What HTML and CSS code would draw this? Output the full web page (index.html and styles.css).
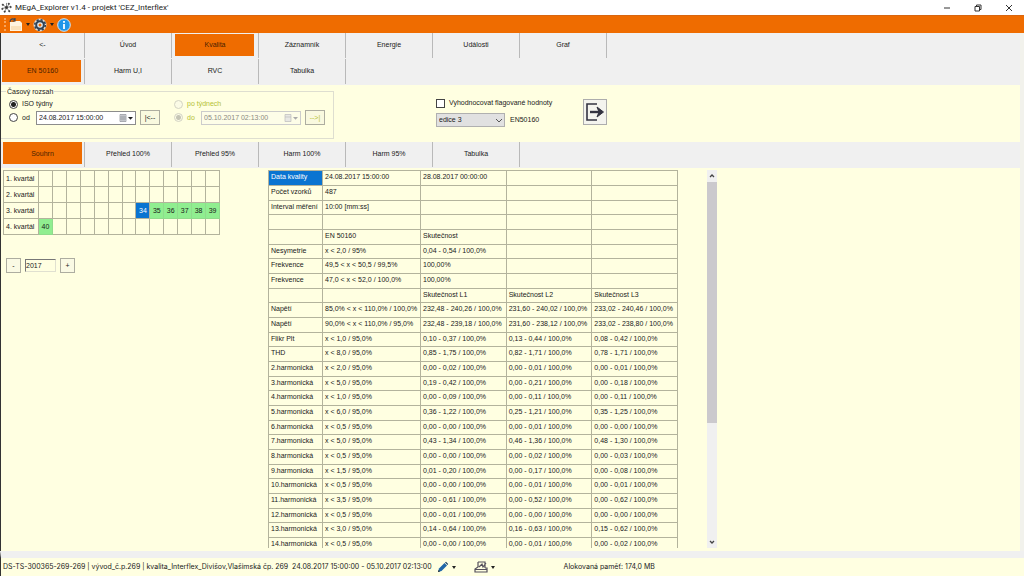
FILE: index.html
```html
<!DOCTYPE html>
<html lang="cs">
<head>
<meta charset="utf-8">
<title>MEgA_Explorer v1.4 - projekt 'CEZ_Interflex'</title>
<link rel="stylesheet" href="styles.css">
</head>
<body>
<header class="titlebar">
  <svg class="app-icon" viewBox="0 0 12 12"><g stroke="#333" stroke-width=".6" fill="#333"><path d="M6 6L6 1M6 6L2 3M6 6L1.500 7M6 6L4 11M6 6L9 10M6 6L10.500 5M6 6L9 2"/><circle cx="6" cy="6" r="1.300"/><circle cx="2" cy="3" r=".8"/><circle cx="1.500" cy="7.500" r=".8"/><circle cx="4" cy="10.500" r=".8"/><circle cx="9" cy="10" r=".8"/><circle cx="10.500" cy="5.500" r=".8"/><circle cx="8.500" cy="2" r=".8"/></g></svg>
  <h1 class="title">MEgA_Explorer v1.4 - projekt 'CEZ_Interflex'</h1>
  <div class="window-buttons">
    <button aria-label="Minimalizovat"><svg viewBox="0 0 8 8"><path d="M1 4H7" stroke="#333" fill="none"/></svg></button>
    <button aria-label="Obnovit"><svg viewBox="0 0 8 8"><path d="M1 2.500H5.500V7H1ZM2.500 2.500V1H7V5.500H5.500" stroke="#333" fill="none"/></svg></button>
    <button aria-label="Zavřít"><svg viewBox="0 0 8 8"><path d="M1 1L7 7M7 1L1 7" stroke="#333" fill="none"/></svg></button>
  </div>
</header>
<nav class="toolbar">
  <span class="grip"></span>
  <button class="tool" aria-label="Otevřít"><svg width="14" height="14" viewBox="0 0 14 14"><path d="M1 4V13H13V5L11 3H6L5 4Z" fill="#fff3df"/><path d="M2 9H12M2 11H12" stroke="#f5cf98"/><path d="M1 4C1 1 4 0 6 2M6 0V3H3.500" stroke="#34465c" stroke-width="1.200" fill="none"/></svg><i class="caret"></i></button>
  <button class="tool" aria-label="Nastavení"><svg width="14" height="14" viewBox="0 0 14 14"><circle cx="7" cy="7" r="6.500" fill="#e3dcd2"/><circle cx="7" cy="7" r="3.800" fill="#e8ecee" stroke="#2f4256" stroke-width="2"/><circle cx="7" cy="7" r="5.300" fill="none" stroke="#2f4256" stroke-width="1.600" stroke-dasharray="2.160 2"/><circle cx="7" cy="7" r="1.500" fill="#ef6c00"/></svg><i class="caret"></i></button>
  <button class="tool" aria-label="Informace"><svg width="14" height="14" viewBox="0 0 14 14"><circle cx="7" cy="7" r="6.300" fill="#2196e8" stroke="#d5e6f2"/><path d="M7 3V4.800M7 6V11" stroke="#fff" stroke-width="1.800"/></svg></button>
</nav>
<main class="client">
  <nav class="tabs">
    <button>&lt;-</button><button>Úvod</button><button class="active">Kvalita</button><button>Záznamník</button><button>Energie</button><button>Události</button><button>Graf</button>
  </nav>
  <nav class="tabs tabs-sub">
    <button class="active">EN 50160</button><button>Harm U,I</button><button>RVC</button><button>Tabulka</button>
  </nav>
  <form class="filters">
    <fieldset class="range">
      <legend>Časový rozsah</legend>
      <div class="range-side">
        <label><input type="radio" name="from" checked>ISO týdny</label>
        <div class="range-line">
          <label><input type="radio" name="from">od</label>
          <span class="date"><input type="text" value="24.08.2017 15:00:00" aria-label="Od"><svg viewBox="0 0 14 8"><path d="M1 .5H7V7.500H1ZM1 3H7M1 5H7M3 1V7M5 1V7" stroke="#8a8d94" fill="#e3e5ea" stroke-width=".7"/><path d="M9 3H14L11.500 5.800Z" fill="#222"/></svg></span>
          <button type="button" class="step">|&lt;--</button>
        </div>
      </div>
      <div class="range-side disabled">
        <label><input type="radio" name="to" disabled>po týdnech</label>
        <div class="range-line">
          <label><input type="radio" name="to" checked disabled>do</label>
          <span class="date"><input type="text" value="05.10.2017 02:13:00" aria-label="Do" disabled><svg viewBox="0 0 14 8"><path d="M1 .5H7V7.500H1ZM1 3H7" stroke="#bbb" fill="#e8e8e4" stroke-width=".7"/><path d="M9 3H14L11.500 5.800Z" fill="#aaa"/></svg></span>
          <button type="button" class="step" disabled>--&gt;|</button>
        </div>
      </div>
    </fieldset>
    <div class="norm">
      <label><input type="checkbox">Vyhodnocovat flagované hodnoty</label>
      <div class="norm-line"><select id="edition" aria-label="Edice"><option>edice 3</option></select><label for="edition">EN50160</label></div>
    </div>
    <button type="button" class="export" aria-label="Export"><svg viewBox="0 0 20 20"><path d="M12 2H2V18H12" fill="none" stroke="#333340" stroke-width="1.600"/><path d="M5 10H17" stroke="#333340" stroke-width="2.400"/><path d="M12 5L18.500 10L12 15L14 10Z" fill="#333340" stroke="#333340"/></svg></button>
  </form>
  <nav class="tabs tabs-view">
    <button class="active">Souhrn</button><button>Přehled 100%</button><button>Přehled 95%</button><button>Harm 100%</button><button>Harm 95%</button><button>Tabulka</button>
  </nav>
  <section class="content">
    <aside class="weeks">
      <table class="week-grid">
        <tr><th>1. kvartál</th><td></td><td></td><td></td><td></td><td></td><td></td><td></td><td></td><td></td><td></td><td></td><td></td><td></td></tr>
        <tr><th>2. kvartál</th><td></td><td></td><td></td><td></td><td></td><td></td><td></td><td></td><td></td><td></td><td></td><td></td><td></td></tr>
        <tr><th>3. kvartál</th><td></td><td></td><td></td><td></td><td></td><td></td><td></td><td class="sel">34</td><td class="has">35</td><td class="has">36</td><td class="has">37</td><td class="has">38</td><td class="has">39</td></tr>
        <tr><th>4. kvartál</th><td class="has">40</td><td></td><td></td><td></td><td></td><td></td><td></td><td></td><td></td><td></td><td></td><td></td><td></td></tr>
      </table>
      <div class="year"><button>-</button><input type="text" value="2017" aria-label="Rok"><button>+</button></div>
    </aside>
    <div class="results">
      <table class="summary">
        <colgroup><col class="c-name"><col class="c-limit"><col class="c-val"><col class="c-val"><col class="c-val"></colgroup>
        <tr><td class="sel">Data kvality</td><td>24.08.2017 15:00:00</td><td>28.08.2017 00:00:00</td><td></td><td></td></tr>
        <tr><td>Počet vzorků</td><td>487</td><td></td><td></td><td></td></tr>
        <tr><td>Interval měření</td><td>10:00 [mm:ss]</td><td></td><td></td><td></td></tr>
        <tr><td></td><td></td><td></td><td></td><td></td></tr>
        <tr><td></td><td>EN 50160</td><td>Skutečnost</td><td></td><td></td></tr>
        <tr><td>Nesymetrie</td><td>x &lt; 2,0 / 95%</td><td>0,04 - 0,54 / 100,0%</td><td></td><td></td></tr>
        <tr><td>Frekvence</td><td>49,5 &lt; x &lt; 50,5 / 99,5%</td><td>100,00%</td><td></td><td></td></tr>
        <tr><td>Frekvence</td><td>47,0 &lt; x &lt; 52,0 / 100,0%</td><td>100,00%</td><td></td><td></td></tr>
        <tr><td></td><td></td><td>Skutečnost L1</td><td>Skutečnost L2</td><td>Skutečnost L3</td></tr>
        <tr><td>Napětí</td><td>85,0% &lt; x &lt; 110,0% / 100,0%</td><td>232,48 - 240,26 / 100,0%</td><td>231,60 - 240,02 / 100,0%</td><td>233,02 - 240,46 / 100,0%</td></tr>
        <tr><td>Napětí</td><td>90,0% &lt; x &lt; 110,0% / 95,0%</td><td>232,48 - 239,18 / 100,0%</td><td>231,60 - 238,12 / 100,0%</td><td>233,02 - 238,80 / 100,0%</td></tr>
        <tr><td>Flikr Plt</td><td>x &lt; 1,0 / 95,0%</td><td>0,10 - 0,37 / 100,0%</td><td>0,13 - 0,44 / 100,0%</td><td>0,08 - 0,42 / 100,0%</td></tr>
        <tr><td>THD</td><td>x &lt; 8,0 / 95,0%</td><td>0,85 - 1,75 / 100,0%</td><td>0,82 - 1,71 / 100,0%</td><td>0,78 - 1,71 / 100,0%</td></tr>
        <tr><td>2.harmonická</td><td>x &lt; 2,0 / 95,0%</td><td>0,00 - 0,02 / 100,0%</td><td>0,00 - 0,01 / 100,0%</td><td>0,00 - 0,01 / 100,0%</td></tr>
        <tr><td>3.harmonická</td><td>x &lt; 5,0 / 95,0%</td><td>0,19 - 0,42 / 100,0%</td><td>0,00 - 0,21 / 100,0%</td><td>0,00 - 0,18 / 100,0%</td></tr>
        <tr><td>4.harmonická</td><td>x &lt; 1,0 / 95,0%</td><td>0,00 - 0,09 / 100,0%</td><td>0,00 - 0,11 / 100,0%</td><td>0,00 - 0,11 / 100,0%</td></tr>
        <tr><td>5.harmonická</td><td>x &lt; 6,0 / 95,0%</td><td>0,36 - 1,22 / 100,0%</td><td>0,25 - 1,21 / 100,0%</td><td>0,35 - 1,25 / 100,0%</td></tr>
        <tr><td>6.harmonická</td><td>x &lt; 0,5 / 95,0%</td><td>0,00 - 0,00 / 100,0%</td><td>0,00 - 0,01 / 100,0%</td><td>0,00 - 0,00 / 100,0%</td></tr>
        <tr><td>7.harmonická</td><td>x &lt; 5,0 / 95,0%</td><td>0,43 - 1,34 / 100,0%</td><td>0,46 - 1,36 / 100,0%</td><td>0,48 - 1,30 / 100,0%</td></tr>
        <tr><td>8.harmonická</td><td>x &lt; 0,5 / 95,0%</td><td>0,00 - 0,00 / 100,0%</td><td>0,00 - 0,02 / 100,0%</td><td>0,00 - 0,03 / 100,0%</td></tr>
        <tr><td>9.harmonická</td><td>x &lt; 1,5 / 95,0%</td><td>0,01 - 0,20 / 100,0%</td><td>0,00 - 0,17 / 100,0%</td><td>0,00 - 0,08 / 100,0%</td></tr>
        <tr><td>10.harmonická</td><td>x &lt; 0,5 / 95,0%</td><td>0,00 - 0,00 / 100,0%</td><td>0,00 - 0,01 / 100,0%</td><td>0,00 - 0,01 / 100,0%</td></tr>
        <tr><td>11.harmonická</td><td>x &lt; 3,5 / 95,0%</td><td>0,00 - 0,61 / 100,0%</td><td>0,00 - 0,52 / 100,0%</td><td>0,00 - 0,62 / 100,0%</td></tr>
        <tr><td>12.harmonická</td><td>x &lt; 0,5 / 95,0%</td><td>0,00 - 0,01 / 100,0%</td><td>0,00 - 0,00 / 100,0%</td><td>0,00 - 0,00 / 100,0%</td></tr>
        <tr><td>13.harmonická</td><td>x &lt; 3,0 / 95,0%</td><td>0,14 - 0,64 / 100,0%</td><td>0,16 - 0,63 / 100,0%</td><td>0,15 - 0,62 / 100,0%</td></tr>
        <tr><td>14.harmonická</td><td>x &lt; 0,5 / 95,0%</td><td>0,00 - 0,00 / 100,0%</td><td>0,00 - 0,01 / 100,0%</td><td>0,00 - 0,02 / 100,0%</td></tr>
      </table>
    </div>
    <div class="scrollbar">
      <svg viewBox="0 0 10 12"><path d="M3 7L5 5L7 7" stroke="#444" stroke-width="1.300" fill="none"/></svg>
      <div class="track"><div class="thumb"></div></div>
      <svg viewBox="0 0 10 12"><path d="M3 5L5 7L7 5" stroke="#444" stroke-width="1.300" fill="none"/></svg>
    </div>
  </section>
</main>
<footer class="status">
  <span class="status-path">DS-TS-300365-269-269 | vývod_č.p.269 | kvalita_Interflex_Divišov,Vlašimská čp. 269&nbsp; 24.08.2017 15:00:00 - 05.10.2017 02:13:00</span>
  <button class="tool" aria-label="Upravit"><svg width="12" height="12" viewBox="0 0 12 12"><path d="M1 11L2 7.500L7.500 2L10 4.500L4.500 10Z" fill="#1f66a8"/><path d="M8 1.500L9 .8L11.200 3L10.500 4Z" fill="#173f68"/><path d="M1 11L1.600 9L3 10.400Z" fill="#222"/></svg><i class="caret"></i></button>
  <button class="tool tool-report" aria-label="Protokol"><svg width="14" height="12" viewBox="0 0 14 12"><path d="M4 1H11V7M4 1V6L1 8V11H13V7H11M1 8.500H13M5 6L8 3L9 6L12 2" fill="none" stroke="#55505c" stroke-width="1.200"/></svg><i class="caret"></i></button>
  <span class="memory">Alokovaná paměť: 174,0 MB</span>
</footer>
</body>
</html>
```
FILE: styles.css
```css
* { box-sizing: border-box; }
html, body { height: 100%; }
body {
  margin: 0;
  display: flex;
  flex-direction: column;
  overflow: hidden;
  background: #ffffe1;
  color: #1a1a1a;
  font: 7px/10px "Liberation Sans", Arial, sans-serif;
}
button, input, select { margin: 0; padding: 0; font: inherit; color: inherit; }
button { border: 0; background: none; }
svg { display: block; flex: none; }

.titlebar { display: flex; align-items: center; height: 15px; padding-left: 1px; background: #fff; flex: none; }
.app-icon { width: 11px; height: 11px; }
.title { margin: 0 0 0 3px; font: 8px/12px Roboto, sans-serif; }
.window-buttons { display: flex; margin-left: auto; }
.window-buttons button { display: grid; place-items: center; width: 31px; height: 14px; }
.window-buttons svg { width: 8px; height: 8px; }

.toolbar { display: flex; align-items: center; height: 18px; padding-left: 4px; gap: 3px; background: #ef6c00; border-top: 1px solid #d9660f; flex: none; }
.grip { width: 2px; height: 13px; border-left: 2px dotted #f8a45c; }
.tool { display: flex; align-items: center; gap: 3px; }
.caret { border: 2px solid transparent; border-top: 3px solid #222; border-bottom: 0; }

.client {
  flex: 1;
  min-height: 0;
  display: flex;
  flex-direction: column;
  border-left: 1px solid #333;
  border-right: 4px solid #f2f2ec;
}
.tabs {
  display: grid;
  grid-template-columns: 84px repeat(6, 87px);
  height: 26px;
  background: #f0f0f0;
  flex: none;
}
.tabs button { height: 25px; padding: 0 0 2px; border-right: 1px solid #b9b9b9; }
.tabs .active {
  background: linear-gradient(#ef6c00, #ef6c00) 3px 1px / 79px 22px no-repeat;
  color: #4a2200;
}
.tabs-sub .active { background-position: 1px 1px; }
.tabs-view .active { background-position: 2px 0; }

.filters { display: flex; align-items: flex-start; height: 57px; flex: none; }
.filters label { display: flex; align-items: center; gap: 4px; white-space: nowrap; }
.range { display: flex; gap: 14px; width: 333px; height: 52px; margin: 2px 0 0; padding: 3px 0 0 8px; border: 1px solid #deded0; border-left: 0; min-width: 0; }
.range legend { margin-left: -3px; padding: 0 1px; height: 9px; line-height: 9px; }
.range-line { display: flex; align-items: center; height: 17px; }
.range-line label { width: 27px; }
.range input[type="radio"] { appearance: none; width: 9px; height: 9px; border: 1px solid #444; border-radius: 50%; background: #fff; }
.range input[type="radio"]:checked { background: radial-gradient(circle, #222 2px, #fff 3px); }
.date { display: flex; align-items: center; width: 100px; height: 14px; padding: 0 2px; background: #fff; border: 1px solid #8c8c8c; }
.date input { flex: 1; min-width: 0; width: 0; border: 0; background: none; }
.date svg { width: 14px; height: 8px; }
.step { width: 20px; height: 15px; margin-left: 4px; border: 1px solid #adada0; background: #f9f9df; }
.disabled { color: #b5c234; }
.range .disabled input[type="radio"] { border-color: #d4d4c4; background: #fbfbe6; }
.range .disabled input[type="radio"]:checked { background: radial-gradient(circle, #c5c5b5 2px, #fbfbe6 3px); }
.disabled .date { background: #fdfde8; border-color: #ccc; color: #8a8a80; }

.norm { width: 147px; margin: 13px 0 0 102px; }
.norm input { appearance: none; width: 9px; height: 9px; border: 1px solid #444; background: #fff; }
.norm-line { display: flex; gap: 5px; margin-top: 5px; }
.norm select {
  appearance: none;
  width: 69px;
  height: 14px;
  padding-left: 2px;
  border: 1px solid #b0b0b0;
  border-radius: 0;
  background:
    linear-gradient(45deg, transparent 45%, #555 45% 60%, transparent 60%) right 5px center / 3px 3px no-repeat,
    linear-gradient(-45deg, transparent 45%, #555 45% 60%, transparent 60%) right 2px center / 3px 3px no-repeat,
    #e1e1e1;
}
.export { display: grid; place-items: center; width: 24px; height: 26px; margin: 14px 0 0; border: 1px solid #adadad; background: #f4f4ee; }
.export svg { width: 20px; height: 20px; }

.content { flex: 1; min-height: 0; display: flex; padding: 2px 0 3px 2px; }
table { border-collapse: collapse; table-layout: fixed; }
td, th { padding: 0; border: 1px solid #b3b39c; font-weight: normal; white-space: nowrap; overflow: hidden; }
.weeks { width: 265px; flex: none; }
.week-grid { width: 217px; }
.week-grid tr { height: 16px; }
.week-grid th { width: 35px; padding-left: 2px; text-align: left; }
.week-grid td { text-align: center; }
.week-grid .has { background: #90ee90; border-color: #8fdc8c; }
.sel { background: #0a74d1; color: #fff; }
.year { display: flex; align-items: center; gap: 4px; margin: 23px 0 0 3px; }
.year button { width: 15px; height: 15px; border: 1px solid #adada0; background: #fafae4; }
.year input { width: 31px; height: 13px; border: 1px solid #e0e0d0; border-top-color: #777; border-left-color: #777; background: #ffffe1; }

.results { width: 411px; overflow: hidden; flex: none; }
.summary { width: 410px; }
.summary tr { height: 15px; }
.summary tr:nth-child(3n) { height: 14px; }
.summary td { padding: 0 0 2px 2px; }
.c-name { width: 54px; }
.c-limit { width: 98px; }
.scrollbar { display: flex; flex-direction: column; width: 10px; margin-left: 28px; background: #f0f0f0; }
.scrollbar svg { width: 10px; height: 12px; }
.track { flex: 1; }
.thumb { height: 68%; background: #cbc9cd; }

.status {
  display: flex;
  align-items: center;
  height: 25px;
  padding-left: 2px;
  border-top: 7px solid #f0f0f0;
  border-left: 1px solid #333;
  font: 7px/12px Inter, "Open Sans", sans-serif;
  flex: none;
}
.status-path { white-space: nowrap; }
.status .tool { margin-left: 5px; }
.status .tool-report { margin-left: 18px; }
.memory { margin-left: 69px; white-space: nowrap; }
```
